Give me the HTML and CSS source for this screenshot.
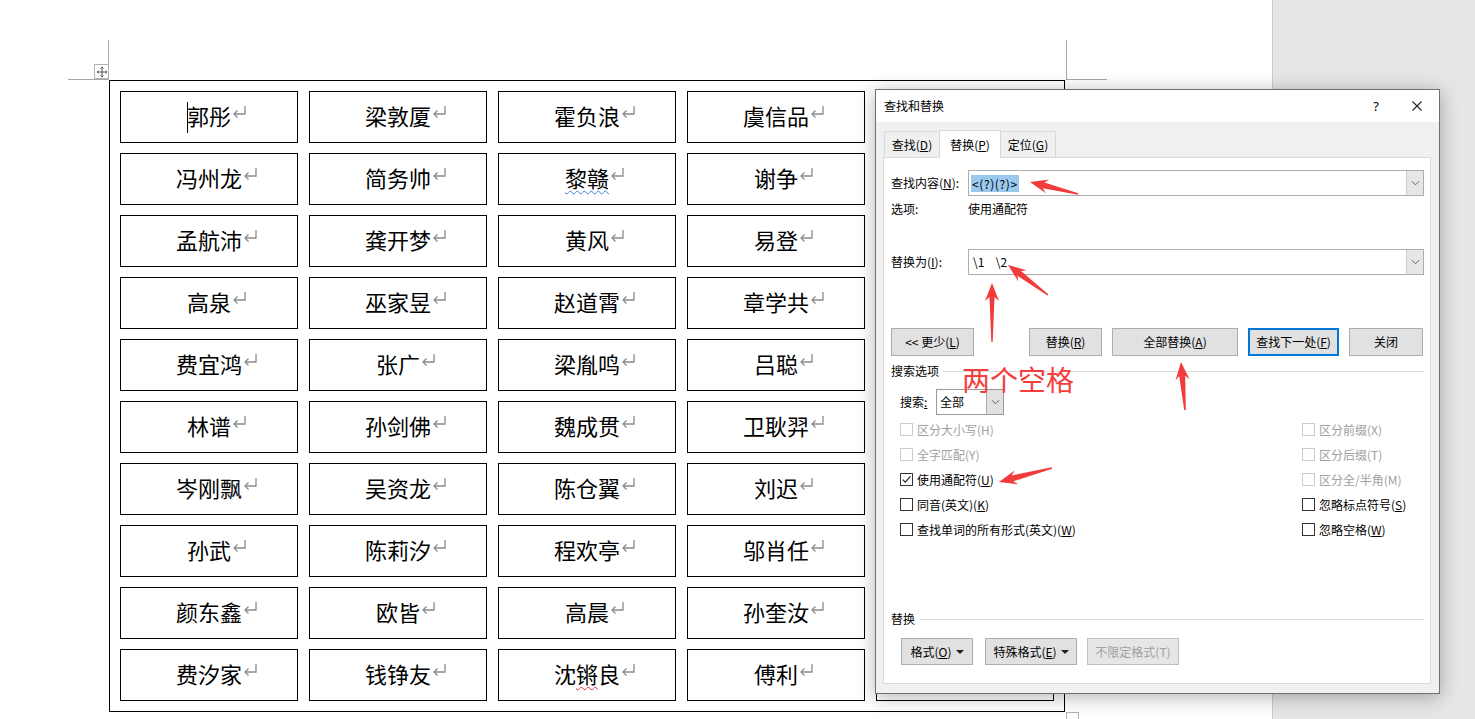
FILE: index.html
```html
<!DOCTYPE html>
<html lang="zh-CN">
<head>
<meta charset="utf-8">
<title>查找和替换</title>
<link rel="stylesheet" href="styles.css">
</head>
<body>
<svg class="defs" aria-hidden="true">
  <symbol id="ret" viewBox="0 0 15 14">
    <path d="M13 1 V9 H2" fill="none" stroke="#8a8a8a" stroke-width="1.3"/>
    <path d="M5.5 5.5 L2 9 L5.5 12.5" fill="none" stroke="#8a8a8a" stroke-width="1.3"/>
  </symbol>
  <symbol id="chev" viewBox="0 0 10 6">
    <path d="M1 1 L5 5 L9 1" fill="none" stroke="#555" stroke-width="1"/>
  </symbol>
</svg>
<div class="screen">
  <div class="doc">
    <span class="crop tlv"></span><span class="crop tlh"></span>
    <span class="crop trv"></span><span class="crop trh"></span>
    <span class="move"><svg viewBox="0 0 12 12" width="12" height="12"><path d="M6 1 V11 M1 6 H11 M4.5 2.5 L6 1 L7.5 2.5 M4.5 9.5 L6 11 L7.5 9.5 M2.5 4.5 L1 6 L2.5 7.5 M9.5 4.5 L11 6 L9.5 7.5" fill="none" stroke="#555" stroke-width="1"/></svg></span>
    <div class="tbl">
      <div class="cell"><span class="caret"></span><span class="tx">郭彤</span><span class="mark"><svg><use href="#ret"/></svg></span></div>
      <div class="cell"><span class="tx">梁敦厦</span><span class="mark"><svg><use href="#ret"/></svg></span></div>
      <div class="cell"><span class="tx">霍负浪</span><span class="mark"><svg><use href="#ret"/></svg></span></div>
      <div class="cell"><span class="tx">虞信品</span><span class="mark"><svg><use href="#ret"/></svg></span></div>
      <div class="cell"></div>

      <div class="cell"><span class="tx">冯州龙</span><span class="mark"><svg><use href="#ret"/></svg></span></div>
      <div class="cell"><span class="tx">简务帅</span><span class="mark"><svg><use href="#ret"/></svg></span></div>
      <div class="cell"><span class="tx"><span class="sq-blue">黎赣</span></span><span class="mark"><svg><use href="#ret"/></svg></span></div>
      <div class="cell"><span class="tx">谢争</span><span class="mark"><svg><use href="#ret"/></svg></span></div>
      <div class="cell"></div>

      <div class="cell"><span class="tx">孟航沛</span><span class="mark"><svg><use href="#ret"/></svg></span></div>
      <div class="cell"><span class="tx">龚开梦</span><span class="mark"><svg><use href="#ret"/></svg></span></div>
      <div class="cell"><span class="tx">黄风</span><span class="mark"><svg><use href="#ret"/></svg></span></div>
      <div class="cell"><span class="tx">易登</span><span class="mark"><svg><use href="#ret"/></svg></span></div>
      <div class="cell"></div>

      <div class="cell"><span class="tx">高泉</span><span class="mark"><svg><use href="#ret"/></svg></span></div>
      <div class="cell"><span class="tx">巫家昱</span><span class="mark"><svg><use href="#ret"/></svg></span></div>
      <div class="cell"><span class="tx">赵道霄</span><span class="mark"><svg><use href="#ret"/></svg></span></div>
      <div class="cell"><span class="tx">章学共</span><span class="mark"><svg><use href="#ret"/></svg></span></div>
      <div class="cell"></div>

      <div class="cell"><span class="tx">费宜鸿</span><span class="mark"><svg><use href="#ret"/></svg></span></div>
      <div class="cell"><span class="tx">张广</span><span class="mark"><svg><use href="#ret"/></svg></span></div>
      <div class="cell"><span class="tx">梁胤鸣</span><span class="mark"><svg><use href="#ret"/></svg></span></div>
      <div class="cell"><span class="tx">吕聪</span><span class="mark"><svg><use href="#ret"/></svg></span></div>
      <div class="cell"></div>

      <div class="cell"><span class="tx">林谱</span><span class="mark"><svg><use href="#ret"/></svg></span></div>
      <div class="cell"><span class="tx">孙剑佛</span><span class="mark"><svg><use href="#ret"/></svg></span></div>
      <div class="cell"><span class="tx">魏成贯</span><span class="mark"><svg><use href="#ret"/></svg></span></div>
      <div class="cell"><span class="tx">卫耿羿</span><span class="mark"><svg><use href="#ret"/></svg></span></div>
      <div class="cell"></div>

      <div class="cell"><span class="tx">岑刚飘</span><span class="mark"><svg><use href="#ret"/></svg></span></div>
      <div class="cell"><span class="tx">吴资龙</span><span class="mark"><svg><use href="#ret"/></svg></span></div>
      <div class="cell"><span class="tx">陈仓翼</span><span class="mark"><svg><use href="#ret"/></svg></span></div>
      <div class="cell"><span class="tx">刘迟</span><span class="mark"><svg><use href="#ret"/></svg></span></div>
      <div class="cell"></div>

      <div class="cell"><span class="tx">孙武</span><span class="mark"><svg><use href="#ret"/></svg></span></div>
      <div class="cell"><span class="tx">陈莉汐</span><span class="mark"><svg><use href="#ret"/></svg></span></div>
      <div class="cell"><span class="tx">程欢亭</span><span class="mark"><svg><use href="#ret"/></svg></span></div>
      <div class="cell"><span class="tx">邬肖任</span><span class="mark"><svg><use href="#ret"/></svg></span></div>
      <div class="cell"></div>

      <div class="cell"><span class="tx">颜东鑫</span><span class="mark"><svg><use href="#ret"/></svg></span></div>
      <div class="cell"><span class="tx">欧皆</span><span class="mark"><svg><use href="#ret"/></svg></span></div>
      <div class="cell"><span class="tx">高晨</span><span class="mark"><svg><use href="#ret"/></svg></span></div>
      <div class="cell"><span class="tx">孙奎汝</span><span class="mark"><svg><use href="#ret"/></svg></span></div>
      <div class="cell"></div>

      <div class="cell"><span class="tx">费汐家</span><span class="mark"><svg><use href="#ret"/></svg></span></div>
      <div class="cell"><span class="tx">钱铮友</span><span class="mark"><svg><use href="#ret"/></svg></span></div>
      <div class="cell"><span class="tx">沈<span class="sq-red">锵</span>良</span><span class="mark"><svg><use href="#ret"/></svg></span></div>
      <div class="cell"><span class="tx">傅利</span><span class="mark"><svg><use href="#ret"/></svg></span></div>
      <div class="cell"></div>
    </div>
    <span class="resize"></span>
  </div>
  <div class="gutter"></div>

  <div class="dlg">
    <div class="dlg-title">
      <span class="ttl">查找和替换</span>
      <span class="help">?</span>
      <svg class="close" viewBox="0 0 10 10" width="10" height="10"><path d="M0.5 0.5 L9.5 9.5 M9.5 0.5 L0.5 9.5" stroke="#222" stroke-width="1.1"/></svg>
    </div>
    <div class="dlg-body">
      <div class="tabs">
        <div class="tab">查找(<u>D</u>)</div>
        <div class="tab active">替换(<u>P</u>)</div>
        <div class="tab">定位(<u>G</u>)</div>
      </div>
      <div class="panel">
        <div class="frow">
          <span class="lbl">查找内容(<u>N</u>):</span>
          <div class="combo"><span class="val"><span class="hl">&lt;(?)(?)&gt;</span></span><span class="dd"><svg><use href="#chev"/></svg></span></div>
        </div>
        <div class="orow"><span class="lbl">选项:</span><span>使用通配符</span></div>
        <div class="frow rrow">
          <span class="lbl">替换为(<u>I</u>):</span>
          <div class="combo"><span class="val plain"><span class="code">\1</span><span class="sp">&nbsp;&nbsp;</span><span class="code">\2</span></span><span class="dd"><svg><use href="#chev"/></svg></span></div>
        </div>
        <div class="btnrow">
          <div class="btn b-less">&lt;&lt; 更少(<u>L</u>)</div>
          <div class="btn b-rep">替换(<u>R</u>)</div>
          <div class="btn b-all">全部替换(<u>A</u>)</div>
          <div class="btn b-next">查找下一处(<u>F</u>)</div>
          <div class="btn b-close">关闭</div>
        </div>
        <div class="group"><span>搜索选项</span><span class="rule"></span></div>
        <div class="srow">
          <span class="slbl">搜索<u>:</u></span>
          <div class="select"><span class="sval">全部</span><span class="dd"><svg><use href="#chev"/></svg></span></div>
        </div>
        <div class="checks">
          <div class="chk dis"><span class="box"></span>区分大小写(H)</div>
          <div class="chk dis"><span class="box"></span>区分前缀(X)</div>
          <div class="chk dis"><span class="box"></span>全字匹配(Y)</div>
          <div class="chk dis"><span class="box"></span>区分后缀(T)</div>
          <div class="chk"><span class="box"><svg viewBox="0 0 11 11" width="11" height="11"><path d="M1.8 5.6 L4.3 8.2 L9.4 2.4" fill="none" stroke="#222" stroke-width="1.2"/></svg></span>使用通配符(<u>U</u>)</div>
          <div class="chk dis"><span class="box"></span>区分全/半角(M)</div>
          <div class="chk"><span class="box"></span>同音(英文)(<u>K</u>)</div>
          <div class="chk"><span class="box"></span>忽略标点符号(<u>S</u>)</div>
          <div class="chk"><span class="box"></span>查找单词的所有形式(英文)(<u>W</u>)</div>
          <div class="chk"><span class="box"></span>忽略空格(<u>W</u>)</div>
        </div>
        <div class="group g2"><span>替换</span><span class="rule"></span></div>
        <div class="fmtrow">
          <div class="btn b-fmt">格式(<u>O</u>)<span class="tri"></span></div>
          <div class="btn b-spec">特殊格式(<u>E</u>)<span class="tri"></span></div>
          <div class="btn b-nofmt disabled">不限定格式(T)</div>
        </div>
      </div>
    </div>
  </div>

  <svg class="anno" viewBox="0 0 1475 719" width="1475" height="719" aria-hidden="true">
    <g fill="#f23b3b">
      <polygon points="1030,182 1049.2,179.6 1044.3,182.5 1078.2,193.2 1077.8,194.8 1042.9,188.3 1045.8,193.2"/>
      <polygon points="1008,265 1026.6,270.2 1021,271 1048.5,294.4 1047.5,295.6 1017.4,275.8 1018.2,281.4"/>
      <polygon points="992,283 999,301 994.5,297 992.7,342 991.3,342 989.5,297 985,301"/>
      <polygon points="1181,362 1189.5,379.3 1185.2,375.7 1185.8,409.9 1184.2,410.1 1179.2,376.1 1175.5,380.5"/>
      <polygon points="999,482 1014.6,470.6 1011.7,475.5 1051.8,467.2 1052.2,468.8 1013.3,481.3 1018.2,484.2"/>
    </g>
  </svg>
  <span class="note">两个空格</span>
</div>
</body>
</html>
```

FILE: styles.css
```css
* { box-sizing: border-box; }
html, body { margin: 0; padding: 0; }
body {
  width: 1475px;
  height: 719px;
  overflow: hidden;
  background: #fff;
  font-family: "Noto Sans CJK SC", "Noto Sans", sans-serif;
  color: #000;
}
.defs { position: absolute; width: 0; height: 0; overflow: hidden; }

.screen { position: relative; display: flex; width: 1475px; height: 719px; }
.doc {
  position: relative;
  width: 1272px;
  height: 719px;
  background: #fff;
  padding: 80px 0 0 109px;
}
.gutter { flex: 1; background: #e6e6e6; border-left: 1px solid #c9c9c9; }

/* crop marks and table handles */
.crop { position: absolute; background: #a8a8a8; }
.tlv { left: 108px; top: 40px; width: 1px; height: 40px; }
.tlh { left: 68px; top: 79px; width: 40px; height: 1px; }
.trv { left: 1066px; top: 40px; width: 1px; height: 40px; }
.trh { left: 1066px; top: 79px; width: 41px; height: 1px; }
.move {
  position: absolute; left: 94px; top: 64px; width: 15px; height: 15px;
  border: 1px solid #b4b4b4; background: #fff;
  display: flex; align-items: center; justify-content: center;
}
.resize {
  position: absolute; left: 1066px; top: 712px; width: 13px; height: 13px;
  border: 1px solid #b4b4b4; background: #fff;
}

/* table */
.tbl {
  width: 956px;
  height: 632px;
  border: 1px solid #000;
  padding: 10px;
  display: grid;
  grid-template-columns: repeat(5, 178px);
  grid-template-rows: repeat(10, 52px);
  column-gap: 11px;
  row-gap: 10px;
}
.cell {
  border: 1px solid #000;
  display: flex;
  align-items: center;
  justify-content: center;
  font-size: 22px;
  line-height: 22px;
  padding-bottom: 4px;
}
.tx { white-space: nowrap; }
.caret { width: 1px; height: 31px; background: #000; margin-right: -1px; margin-top: 4px; }
.mark { width: 0; height: 22px; align-self: center; }
.mark svg { display: block; width: 15px; height: 14px; margin-top: 1px; margin-left: 1px; }
.sq-blue { text-decoration: underline wavy #3d7fe0; text-decoration-thickness: 1px; text-underline-offset: 3px; }
.sq-red { text-decoration: underline wavy #e23030; text-decoration-thickness: 1px; text-underline-offset: 3px; }

/* dialog */
.dlg {
  position: absolute;
  left: 875px;
  top: 89px;
  width: 565px;
  height: 605px;
  border: 1px solid #707070;
  background: #f0f0f0;
  box-shadow: 0 3px 18px rgba(0, 0, 0, 0.3);
  font-size: 12px;
  line-height: 18px;
  display: flex;
  flex-direction: column;
}
.dlg u { text-decoration: underline; text-underline-offset: 1px; }
.dlg-title {
  height: 32px;
  background: #fff;
  display: flex;
  align-items: center;
  padding-left: 8px;
}
.ttl { flex: 1; }
.help { width: 12px; font-size: 13px; text-align: center; margin-right: 30px; font-family: "Noto Sans", sans-serif; }
.close { margin-right: 17px; }

.dlg-body { flex: 1; padding: 9px 8px 9px 7px; display: flex; flex-direction: column; }
.tabs { display: flex; align-items: flex-end; height: 26px; padding-left: 1px; }
.tab {
  height: 26px;
  border: 1px solid #d9d9d9;
  border-bottom: none;
  background: #f0f0f0;
  display: flex;
  align-items: center;
  justify-content: center;
  width: 56px;
}
.tab + .tab { margin-left: -1px; }
.tab.active {
  width: 62px;
  height: 28px;
  margin-bottom: -1px;
  background: #fff;
  position: relative;
  z-index: 1;
}
.panel {
  flex: 1;
  background: #fff;
  border: 1px solid #d9d9d9;
  padding: 12px 6px 0 7px;
  display: flex;
  flex-direction: column;
}
.frow { display: flex; height: 26px; align-items: center; }
.lbl { width: 77px; flex: none; }
.combo {
  flex: 1;
  height: 26px;
  border: 1px solid #adadad;
  display: flex;
  align-items: stretch;
}
.val { flex: 1; display: flex; align-items: center; padding-left: 2px; }
.val.plain { padding-left: 4px; }
.sp { letter-spacing: 3px; }
.hl { background: #99c9ef; line-height: 17px; padding: 0 1px; letter-spacing: 0.6px; }
.dd {
  width: 17px;
  background: #e6e6e6;
  border-left: 1px solid #cfcfcf;
  display: flex;
  align-items: center;
  justify-content: center;
}
.dd svg { width: 9px; height: 6px; }
.orow { display: flex; margin-top: 4px; height: 18px; align-items: center; }
.rrow { margin-top: 31px; }

.btn {
  height: 28px;
  border: 1px solid #adadad;
  background: #e1e1e1;
  display: flex;
  align-items: center;
  justify-content: center;
  white-space: nowrap;
}
.btnrow { display: flex; margin-top: 53px; gap: 10px; }
.b-less { width: 83px; margin-right: 45px; }
.b-rep { width: 73px; }
.b-all { width: 126px; }
.b-next { width: 91px; border: 2px solid #0078d7; }
.b-close { width: 74px; }

.group { display: flex; align-items: center; height: 18px; margin-top: 6px; }
.group .rule { flex: 1; height: 1px; background: #dcdcdc; margin-left: 4px; }
.g2 { margin-top: 68px; }
.g2 .rule { margin-left: 5px; }

.srow { display: flex; align-items: center; margin-top: 9px; padding-left: 9px; height: 26px; }
.slbl { width: 36px; }
.select {
  width: 68px;
  height: 26px;
  border: 1px solid #9a9a9a;
  display: flex;
}
.sval { flex: 1; display: flex; align-items: center; padding-left: 3px; }
.select .dd { border-left-color: #adadad; background: #e1e1e1; }

.checks {
  display: grid;
  grid-template-columns: 402px 1fr;
  grid-auto-rows: 25px;
  margin-top: 2px;
  padding-left: 9px;
}
.chk { display: flex; align-items: center; white-space: nowrap; }
.box {
  width: 13px;
  height: 13px;
  border: 1px solid #333;
  background: #fff;
  margin-right: 4px;
  display: flex;
  align-items: center;
  justify-content: center;
}
.chk.dis { color: #a0a0a0; }
.chk.dis .box { border-color: #cccccc; }

.fmtrow { display: flex; margin-top: 10px; padding-left: 10px; }
.fmtrow .btn { height: 27px; }
.b-fmt { width: 72px; margin-right: 12px; }
.b-spec { width: 92px; margin-right: 10px; }
.b-nofmt { width: 92px; }
.btn.disabled { color: #a0a0a0; border-color: #bfbfbf; background: #e6e6e6; }
.tri {
  width: 0; height: 0;
  border-left: 4px solid transparent;
  border-right: 4px solid transparent;
  border-top: 4px solid #222;
  margin-left: 4px;
}

/* annotations */
.anno { position: absolute; left: 0; top: 0; pointer-events: none; }
.note {
  position: absolute;
  left: 962px;
  top: 365px;
  font-size: 28px;
  line-height: 28px;
  color: #f53d3d;
  white-space: nowrap;
}
```
